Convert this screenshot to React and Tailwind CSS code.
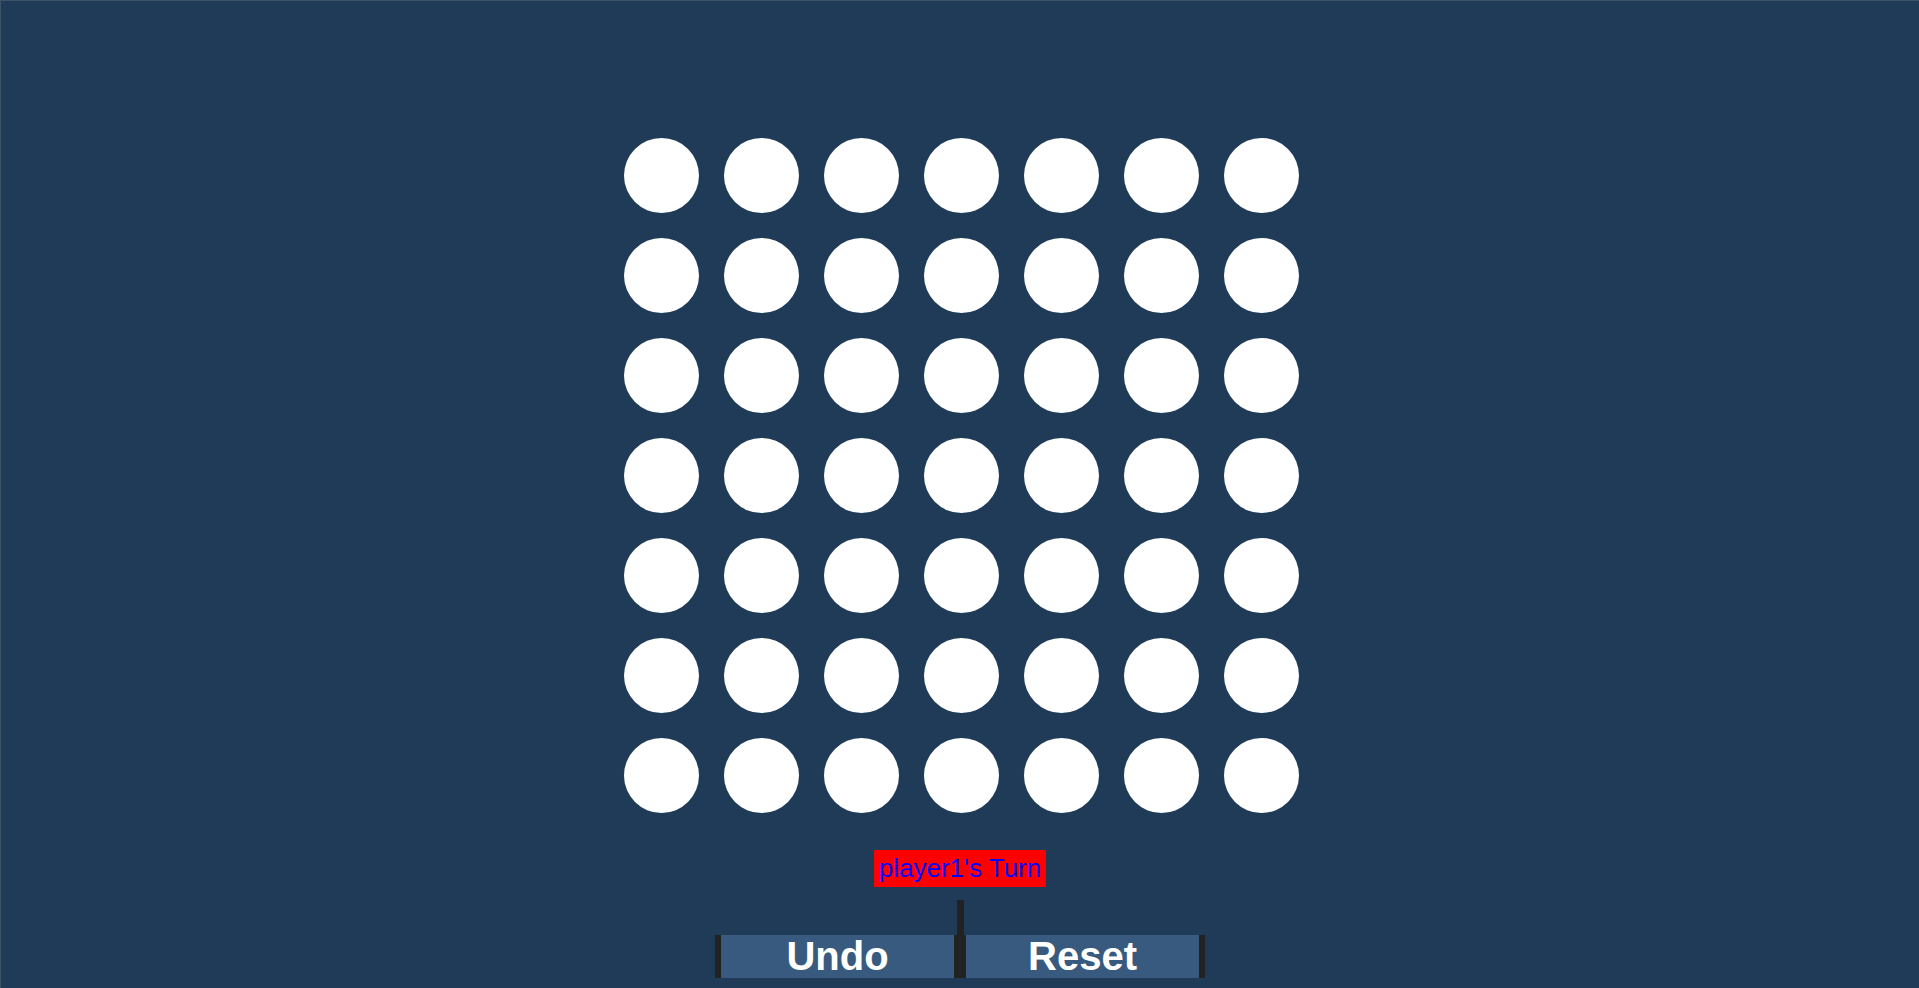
import React from "react";

const ROWS = 7;
const COLS = 7;

const App = () => {
  const cells = Array.from({ length: ROWS * COLS }, (_, i) => i);

  return (
    <div
      className="h-screen w-full overflow-hidden bg-[#1f3b57] border-t border-l border-[#3e5266] flex flex-col items-center"
      style={{ fontFamily: '"Liberation Sans", Arial, sans-serif' }}>
      {/* board */}
      <div className="mt-[137px] ml-[2px] grid grid-cols-[repeat(7,75px)] gap-[25px]">
        {cells.map((i) => (
          <div key={i} className="w-[75px] h-[75px] rounded-full bg-white" />
        ))}
      </div>

      {/* turn indicator */}
      <div className="mt-[37px] w-[172px] h-[37px] bg-[#ff0000] text-[#0000ff] text-[26px] flex items-center justify-center">
        player1's Turn
      </div>

      <div className="mt-[13px] w-[7px] h-[35px] bg-[#222222]" />

      {/* controls */}
      <div className="flex">
        <button className="w-[245px] h-[43px] bg-[#375a7e] border-x-[6px] border-[#222222] text-white font-bold text-[40px] leading-[43px]">
          Undo
        </button>
        <button className="w-[245px] h-[43px] bg-[#375a7e] border-x-[6px] border-[#222222] text-white font-bold text-[40px] leading-[43px]">
          Reset
        </button>
      </div>
    </div>
  );
};

export default App;
